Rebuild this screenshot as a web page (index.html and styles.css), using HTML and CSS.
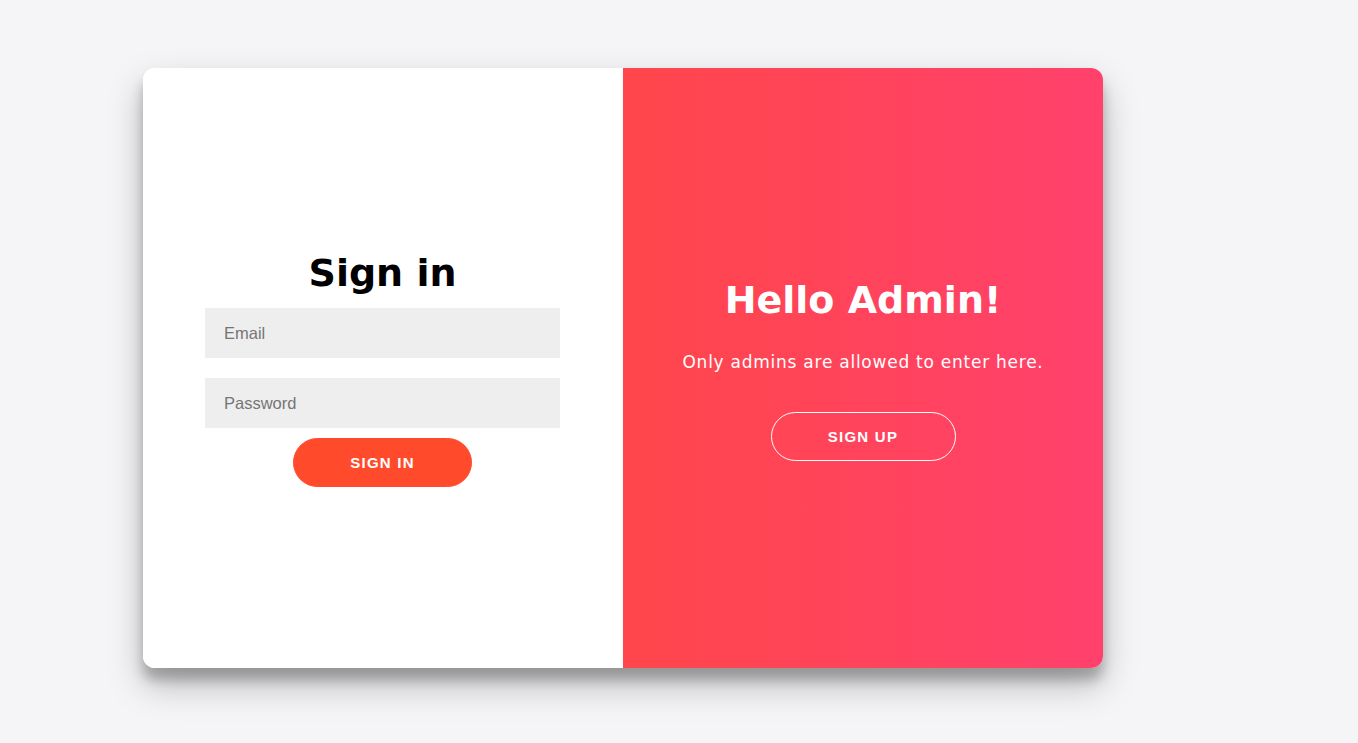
FILE: index.html
```html
<!DOCTYPE html>
<html lang="en">
<head>
<meta charset="utf-8">
<title>Admin Sign in</title>
<link rel="stylesheet" href="styles.css">
</head>
<body>
  <div class="container">
    <div class="signin-panel">
      <form class="signin-form">
        <h1 class="title">Sign in</h1>
        <input class="field" type="email" placeholder="Email">
        <input class="field field-second" type="password" placeholder="Password">
        <button class="btn btn-solid" type="button">Sign In</button>
      </form>
    </div>
    <div class="overlay-panel">
      <h1 class="title title-light">Hello Admin!</h1>
      <p class="lead">Only admins are allowed to enter here.</p>
      <button class="btn btn-ghost" type="button">Sign Up</button>
    </div>
  </div>
</body>
</html>
```
FILE: styles.css
```css
* { box-sizing: border-box; }

html, body {
  margin: 0;
  height: 100%;
}

body {
  background: #f5f5f7;
  font-family: "DejaVu Sans", "Liberation Sans", sans-serif;
  padding: 68px 0 0 143px;
}

.container {
  width: 960px;
  height: 600px;
  background: #fff;
  border-radius: 12px;
  overflow: hidden;
  display: grid;
  grid-template-columns: 480px 480px;
  box-shadow: 0 17px 35px rgba(0, 0, 0, 0.25), 0 12px 12px rgba(0, 0, 0, 0.22);
}

.signin-panel {
  background: #fff;
}

.signin-form {
  height: 100%;
  padding: 0 63px 0 62px;
  display: flex;
  flex-direction: column;
  align-items: center;
  justify-content: center;
  text-align: center;
  margin: 0;
}

.title {
  margin: 0;
  font-family: "DejaVu Sans", sans-serif;
  font-weight: 700;
  font-size: 38px;
  line-height: 49px;
  color: #000;
}

.title-light {
  color: #fff;
}

.field {
  width: 100%;
  height: 50px;
  background: #eee;
  border: none;
  margin: 10px 0;
  padding: 0 19px;
  font-family: "Liberation Sans", Arial, sans-serif;
  font-size: 16.5px;
  color: #333;
  outline: none;
}

.field::placeholder {
  color: #757575;
}

.btn {
  height: 49px;
  border-radius: 25px;
  font-family: "Liberation Sans", Arial, sans-serif;
  font-weight: 700;
  font-size: 15px;
  letter-spacing: 1.25px;
  text-transform: uppercase;
  color: #fff;
  cursor: pointer;
}

.btn-solid {
  width: 179px;
  background: #ff4b2b;
  border: 1px solid #ff4b2b;
}

.btn-ghost {
  width: 185px;
  background: transparent;
  border: 1px solid #fff;
}

.overlay-panel {
  background: linear-gradient(to right, #ff464b, #ff416c);
  color: #fff;
  display: flex;
  flex-direction: column;
  align-items: center;
  justify-content: center;
  text-align: center;
  padding: 0 50px;
}

.lead {
  font-family: "DejaVu Sans", sans-serif;
  font-size: 17px;
  font-weight: 400;
  line-height: 25px;
  letter-spacing: 0.75px;
  margin: 25px 0 37px;
}
```
